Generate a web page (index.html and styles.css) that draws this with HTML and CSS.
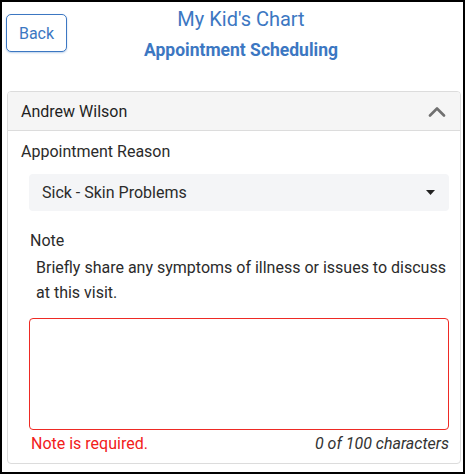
FILE: index.html
```html
<!DOCTYPE html>
<html lang="en">
<head>
<meta charset="utf-8">
<title>Appointment Scheduling</title>
<link rel="stylesheet" href="styles.css">
</head>
<body>
<div class="frame">
  <header class="top">
    <button class="back" type="button">Back</button>
    <div class="titles">
      <h1 class="app-title">My Kid's Chart</h1>
      <h2 class="page-title">Appointment Scheduling</h2>
    </div>
  </header>
  <section class="card">
    <div class="card-head">
      <span class="patient">Andrew Wilson</span>
      <svg class="chev" width="18" height="11" viewBox="0 0 18 11" aria-hidden="true">
        <path d="M2 9.5 L9 2.5 L16 9.5" fill="none" stroke="#707070" stroke-width="2.6" stroke-linecap="round" stroke-linejoin="round"/>
      </svg>
    </div>
    <div class="card-body">
      <div class="field-label">Appointment Reason</div>
      <div class="select">
        <span>Sick - Skin Problems</span>
        <svg class="caret" width="9" height="5" viewBox="0 0 9 5" aria-hidden="true"><path d="M0 0 H9 L4.5 5 Z" fill="#222"/></svg>
      </div>
      <div class="note-label">Note</div>
      <p class="note-help">Briefly share any symptoms of illness or issues to discuss at this visit.</p>
      <div class="textarea"></div>
      <div class="note-foot">
        <span class="error">Note is required.</span>
        <span class="count">0 of 100 characters</span>
      </div>
    </div>
  </section>
</div>
</body>
</html>
```

FILE: styles.css
```css
* { box-sizing: border-box; }
html, body { margin: 0; padding: 0; background: #fff; }
body { font-family: Roboto, "Liberation Sans", Arial, sans-serif; color: #2b2b2b; }

.frame {
  width: 465px;
  height: 474px;
  border: 2px solid #000;
  display: flex;
  flex-direction: column;
}

.top {
  display: grid;
  height: 89px;
  padding: 0 0 0 4px;
}
.back, .titles { grid-area: 1 / 1; }
.back {
  justify-self: start;
  align-self: start;
  margin-top: 12px;
  width: 61px;
  height: 38px;
  background: #fff;
  border: 1px solid #3c77c2;
  border-radius: 5px;
  box-shadow: 0 1px 2px rgba(60, 119, 194, 0.35);
  color: #3c77c2;
  font-family: Roboto, "Liberation Sans", Arial, sans-serif;
  font-size: 16px;
  padding: 0;
}
.titles {
  text-align: center;
  padding-left: 13px;
  color: #3c77c2;
}
.app-title {
  margin: 4px 0 0;
  font-size: 20px;
  font-weight: 400;
  line-height: 26px;
}
.page-title {
  margin: 7px 0 0;
  font-size: 17.5px;
  font-weight: 700;
  line-height: 22px;
}

.card {
  margin: 0 2px 8px 5px;
  flex: 1;
  border: 1px solid #dcdcdc;
  border-radius: 4px;
}
.card-head {
  height: 39px;
  background: #f5f5f5;
  border-bottom: 1px solid #dcdcdc;
  border-radius: 3px 3px 0 0;
  display: flex;
  align-items: center;
  justify-content: space-between;
  padding: 0 14px 0 13px;
}
.patient { font-size: 16px; color: #1f1f1f; }
.chev { display: block; }

.card-body { padding: 9px 11px 0 13px; }
.field-label { font-size: 16px; line-height: 24px; color: #2b2b2b; }
.select {
  margin: 10px 0 0 8px;
  height: 37px;
  background: #f4f5f7;
  border-radius: 4px;
  display: flex;
  align-items: center;
  justify-content: space-between;
  padding: 0 14px 0 13px;
  font-size: 16px;
  color: #2b2b2b;
}
.caret { display: block; }
.note-label { margin: 18px 0 0 9px; font-size: 16px; line-height: 24px; }
.note-help { margin: 2px 0 0 15px; font-size: 16px; line-height: 25px; }
.textarea {
  margin: 13px 0 0 8px;
  height: 112px;
  border: 1px solid #ee2a24;
  border-radius: 4px;
}
.note-foot {
  display: flex;
  justify-content: space-between;
  margin: 2px 0 0 10px;
  font-size: 16px;
  line-height: 24px;
}
.error { color: #f2201a; }
.count { font-style: italic; color: #333; }
```
